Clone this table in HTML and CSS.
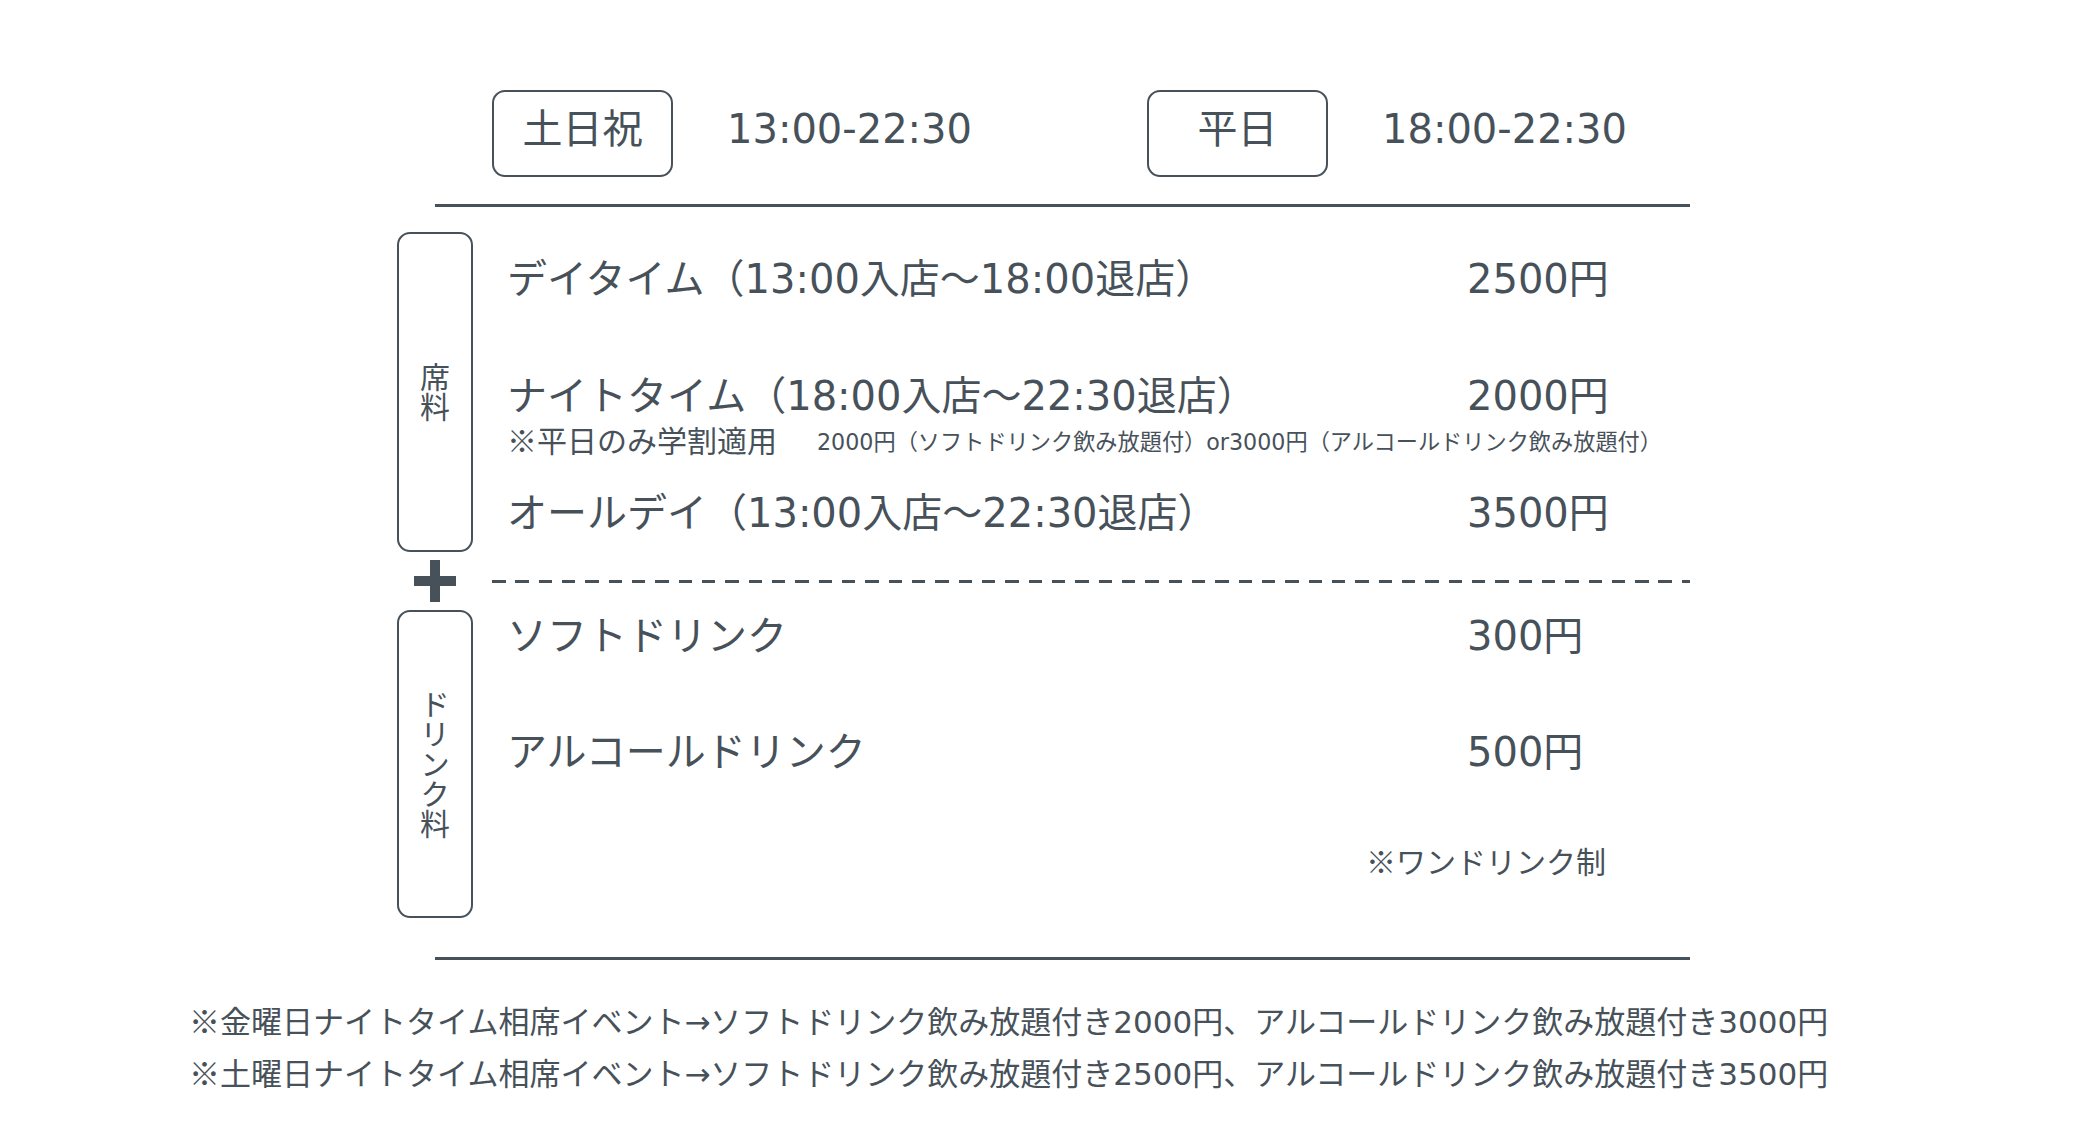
FILE: index.html
```html
<!DOCTYPE html>
<html lang="ja">
<head>
<meta charset="utf-8">
<title>料金</title>
<link rel="stylesheet" href="styles.css">
</head>
<body>
<div class="page">
  <div class="header">
    <div class="hgroup">
      <div class="tag">土日祝</div>
      <div class="time">13:00-22:30</div>
    </div>
    <div class="hgroup">
      <div class="tag">平日</div>
      <div class="time">18:00-22:30</div>
    </div>
  </div>

  <div class="rule rule-top"></div>

  <div class="section seat">
    <div class="label"><span class="vtext">席料</span></div>
    <div class="rows">
      <div class="row row-day"><span class="name">デイタイム（13:00入店〜18:00退店）</span><span class="price">2500円</span></div>
      <div class="row row-night"><span class="name">ナイトタイム（18:00入店〜22:30退店）</span><span class="price">2000円</span></div>
      <div class="subnote"><span class="subnote-main"><span class="cjk">※</span>平日のみ学割適用</span><span class="subnote-small">2000円（ソフトドリンク飲み放題付）or3000円（アルコールドリンク飲み放題付）</span></div>
      <div class="row row-all"><span class="name">オールデイ（13:00入店〜22:30退店）</span><span class="price">3500円</span></div>
    </div>
  </div>

  <div class="plusrow">
    <div class="plus">
      <svg width="42" height="42" viewBox="0 0 42 42"><rect x="16" y="0" width="10" height="42"/><rect x="0" y="16" width="42" height="10"/></svg>
    </div>
    <div class="dashed"></div>
  </div>

  <div class="section drink">
    <div class="label"><span class="vtext">ドリンク料</span></div>
    <div class="rows">
      <div class="row row-soft"><span class="name">ソフトドリンク</span><span class="price">300円</span></div>
      <div class="row row-alc"><span class="name">アルコールドリンク</span><span class="price">500円</span></div>
      <div class="onedrink"><span class="cjk">※</span>ワンドリンク制</div>
    </div>
  </div>

  <div class="rule rule-bottom"></div>

  <div class="footer">
    <p><span class="cjk">※</span>金曜日ナイトタイム相席イベント→ソフトドリンク飲み放題付き2000円、アルコールドリンク飲み放題付き3000円</p>
    <p><span class="cjk">※</span>土曜日ナイトタイム相席イベント→ソフトドリンク飲み放題付き2500円、アルコールドリンク飲み放題付き3500円</p>
  </div>
</div>
</body>
</html>
```

FILE: styles.css
```css
html, body {
  margin: 0;
  padding: 0;
  background: #ffffff;
}

body {
  font-family: "DejaVu Sans", "Noto Sans CJK JP", sans-serif;
  color: #47515a;
}

.cjk {
  font-family: "Noto Sans CJK JP", sans-serif;
  line-height: 0;
}

.page {
  padding-top: 90px;
  width: 2086px;
}

/* header */
.header {
  display: flex;
  margin-left: 492px;
}

.hgroup {
  width: 655px;
  display: flex;
  align-items: center;
}

.tag {
  box-sizing: border-box;
  width: 181px;
  height: 87px;
  padding-bottom: 10px;
  border: 2px solid #47515a;
  border-radius: 13px;
  display: flex;
  align-items: center;
  justify-content: center;
  font-size: 40px;
  line-height: 1;
}

.time {
  margin-left: 54px;
  margin-bottom: 9px;
  font-size: 40px;
  line-height: 1;
}

/* rules */
.rule {
  margin-left: 435px;
  width: 1255px;
  height: 3px;
  background: #47515a;
}

.rule-top {
  margin-top: 27px;
}

.rule-bottom {
  margin-top: 39px;
}

/* sections */
.section {
  display: grid;
  grid-template-columns: 76px 1fr;
  margin-left: 397px;
}

.seat {
  margin-top: 25px;
}

.label {
  box-sizing: border-box;
  border: 2px solid #47515a;
  border-radius: 13px;
  display: flex;
  align-items: center;
  justify-content: center;
}

.vtext {
  writing-mode: vertical-rl;
  font-family: "Noto Sans CJK JP", sans-serif;
  font-size: 30px;
  line-height: 1;
}

.rows {
  padding-left: 34px;
  display: flex;
  flex-direction: column;
}

.row {
  display: flex;
  align-items: center;
  height: 60px;
  font-size: 40px;
  line-height: 60px;
  white-space: nowrap;
}

.name {
  width: 960px;
}

.seat .rows {
  padding-top: 17px;
  padding-bottom: 9px;
}

.row-night {
  margin-top: 57px;
}

.subnote {
  display: flex;
  align-items: center;
  height: 32px;
  white-space: nowrap;
}

.subnote-main {
  width: 310px;
  font-size: 30px;
  line-height: 32px;
}

.subnote-small {
  font-size: 22.2px;
  line-height: 32px;
}

.row-all {
  margin-top: 25px;
}

/* plus row */
.plusrow {
  display: grid;
  grid-template-columns: 76px 1fr;
  margin-left: 397px;
  height: 58px;
  align-items: center;
}

.plus {
  display: flex;
  justify-content: center;
  align-items: center;
}

.plus svg {
  display: block;
  fill: #47515a;
}

.dashed {
  margin-left: 19px;
  width: 1198px;
  height: 3px;
  background: repeating-linear-gradient(to right, #47515a 0, #47515a 13.5px, transparent 13.5px, transparent 23.33px);
}

/* drink section */
.drink .rows {
  padding-bottom: 35px;
}

.row-soft {
  height: 52px;
  line-height: 52px;
}

.row-alc {
  height: 52px;
  line-height: 52px;
  margin-top: 64px;
}

.onedrink {
  margin-top: 65px;
  width: 1099px;
  text-align: right;
  font-size: 30px;
  line-height: 40px;
  height: 40px;
  white-space: nowrap;
}

/* footer */
.footer {
  margin-top: 36px;
  margin-left: 189px;
}

.footer p {
  margin: 0;
  font-size: 31px;
  line-height: 52px;
  height: 52px;
  white-space: nowrap;
}
```
